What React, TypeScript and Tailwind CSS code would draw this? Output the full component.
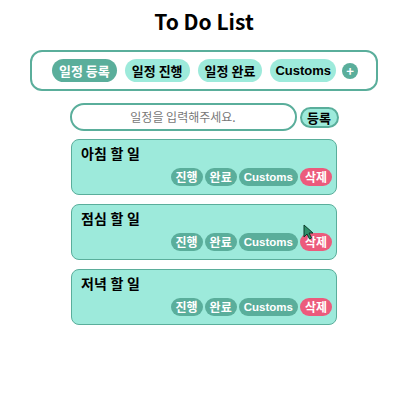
import React from "react";

const font = { fontFamily: '"Noto Sans CJK KR", "Noto Sans", sans-serif' };
const latin = { fontFamily: '"Liberation Sans", Arial, sans-serif' };

function Card({ title, cursor }: { title: string; cursor?: boolean }) {
  const pill = "h-[18px] px-[5px] rounded-full text-white text-[12px] font-bold leading-[18px]";
  return (
    <div className="relative w-[266px] h-[56px] rounded-[8px] border border-[#5aae9b] bg-[#9deadb] px-[9px] pt-[3px]">
      <div className="text-[14px] font-bold leading-[20px] text-black tracking-[0.2px]">{title}</div>
      <div className="absolute right-[4px] bottom-[8px] flex gap-[2px]">
        <span className={`${pill} bg-[#5aae9b]`}>진행</span>
        <span className={`${pill} bg-[#5aae9b]`}>완료</span>
        <span className="h-[18px] px-[5px] rounded-full bg-[#5aae9b] text-white text-[11.5px] font-bold leading-[18px]" style={latin}>Customs</span>
        <span className={`${pill} bg-[#ec5b7c]`}>삭제</span>
      </div>
      {cursor && (
        <svg className="absolute left-[231px] top-[19px]" width="12" height="16" viewBox="0 0 12 16">
          <path d="M1 1 L1 13 L4 10 L6.5 15 L8.5 14 L6 9 L10 9 Z" fill="#2f8f6a" stroke="#0b3d2a" strokeWidth="1" />
        </svg>
      )}
    </div>
  );
}

export default function App() {
  const nav = "h-[23px] px-[7px] rounded-full text-[13px] font-bold leading-[23px]";
  return (
    <div className="w-[400px] h-[403px] bg-white flex flex-col items-center pl-[8px]" style={font}>
      <h1 className="mt-[6px] text-[21px] font-bold leading-[30px] text-black">To Do List</h1>
      <div className="mt-[14px] w-[348px] h-[41px] rounded-[12px] border-2 border-[#5aae9b] flex items-center justify-center gap-[8px] pl-[2px]">
        <span className={`${nav} bg-[#5aae9b] text-white`}>일정 등록</span>
        <span className={`${nav} bg-[#9deadb] text-black`}>일정 진행</span>
        <span className={`${nav} bg-[#9deadb] text-black`}>일정 완료</span>
        <span className="h-[23px] px-[5px] rounded-full bg-[#9deadb] text-black text-[13px] font-bold leading-[23px]" style={latin}>Customs</span>
        <span className="-ml-[2px] w-[16px] h-[16px] rounded-full bg-[#5aae9b] text-white text-[13px] font-bold leading-[15px] text-center">+</span>
      </div>
      <div className="mt-[12px] flex items-center gap-[3px]">
        <div className="w-[227px] h-[28px] rounded-full border-2 border-[#5aae9b] flex items-center justify-center text-[12px] text-[#777]">
          일정을 입력해주세요.
        </div>
        <span className="h-[21px] w-[39px] rounded-full border-2 border-[#5aae9b] bg-[#9deadb] text-[13px] font-bold leading-[17px] text-center text-black">등록</span>
      </div>
      <div className="mt-[8px] flex flex-col gap-[9px]">
        <Card title="아침 할 일" />
        <Card title="점심 할 일" cursor />
        <Card title="저녁 할 일" />
      </div>
    </div>
  );
}
